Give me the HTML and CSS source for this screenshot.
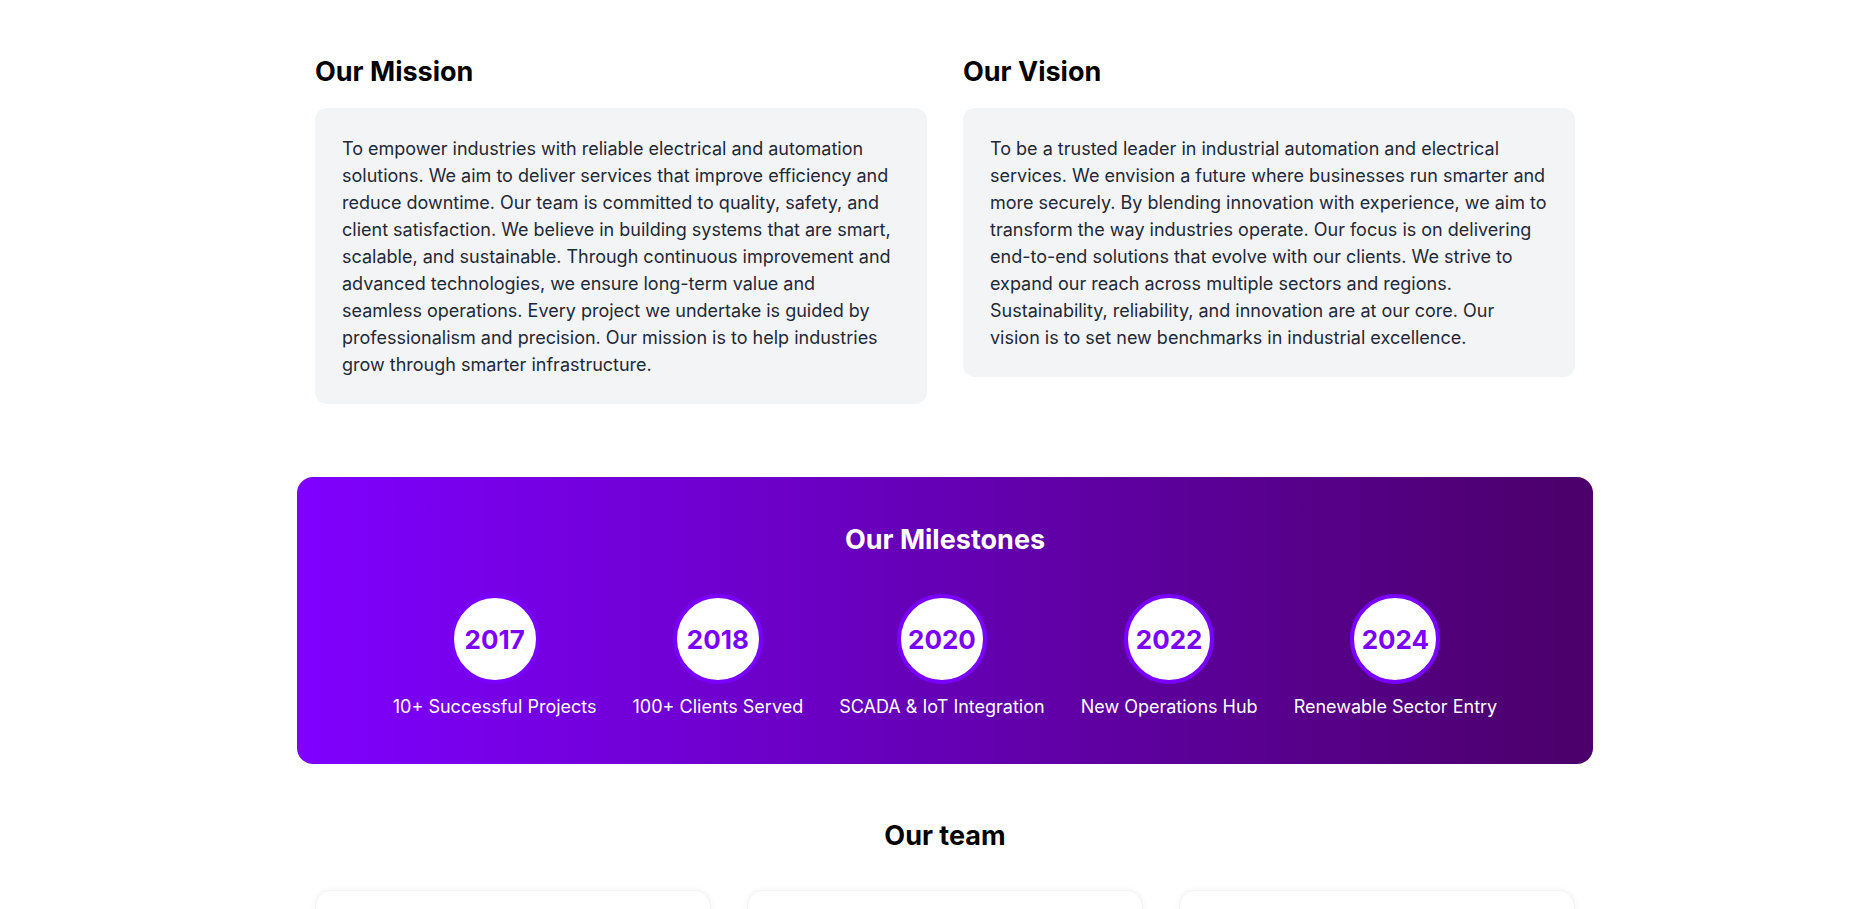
FILE: index.html
```html
<!DOCTYPE html>
<html lang="en">
<head>
<meta charset="utf-8">
<title>About</title>
<link rel="stylesheet" href="styles.css">
</head>
<body>
<main class="page">
  <section class="mv">
    <div class="mv-col">
      <h2 class="mv-title">Our Mission</h2>
      <div class="mv-card">
        <p>To empower industries with reliable electrical and automation solutions. We aim to deliver services that improve efficiency and reduce downtime. Our team is committed to quality, safety, and client satisfaction. We believe in building systems that are smart, scalable, and sustainable. Through continuous improvement and advanced technologies, we ensure long-term value and seamless operations. Every project we undertake is guided by professionalism and precision. Our mission is to help industries grow through smarter infrastructure.</p>
      </div>
    </div>
    <div class="mv-col">
      <h2 class="mv-title">Our Vision</h2>
      <div class="mv-card">
        <p>To be a trusted leader in industrial automation and electrical services. We envision a future where businesses run smarter and more securely. By blending innovation with experience, we aim to transform the way industries operate. Our focus is on delivering end-to-end solutions that evolve with our clients. We strive to expand our reach across multiple sectors and regions. Sustainability, reliability, and innovation are at our core. Our vision is to set new benchmarks in industrial excellence.</p>
      </div>
    </div>
  </section>

  <section class="milestones">
    <h2 class="ms-title">Our Milestones</h2>
    <div class="ms-row">
      <div class="ms-item"><div class="ms-circle">2017</div><div class="ms-label">10+ Successful Projects</div></div>
      <div class="ms-item"><div class="ms-circle">2018</div><div class="ms-label">100+ Clients Served</div></div>
      <div class="ms-item"><div class="ms-circle">2020</div><div class="ms-label">SCADA &amp; IoT Integration</div></div>
      <div class="ms-item"><div class="ms-circle">2022</div><div class="ms-label">New Operations Hub</div></div>
      <div class="ms-item"><div class="ms-circle">2024</div><div class="ms-label">Renewable Sector Entry</div></div>
    </div>
  </section>

  <section class="team">
    <h2 class="team-title">Our team</h2>
    <div class="team-grid">
      <div class="team-card"></div>
      <div class="team-card"></div>
      <div class="team-card"></div>
    </div>
  </section>
</main>
</body>
</html>
```
FILE: styles.css
```css
* { box-sizing: border-box; }

html, body {
  margin: 0;
  background: #ffffff;
  font-family: Inter, "Noto Sans", "Liberation Sans", sans-serif;
  color: #000;
}

body { overflow: hidden; }

.page {
  max-width: 1277px;
  margin: 0 auto;
  padding: 54px 0 0 17px;
}

.mv {
  display: grid;
  grid-template-columns: 1fr 1fr;
  column-gap: 36px;
  align-items: start;
}

.mv-title {
  margin: 0 0 18px;
  font-size: 27px;
  line-height: 36px;
  font-weight: 700;
  color: #000;
}

.mv-card {
  background: #f3f4f6;
  border-radius: 12px;
  padding: 27px 27px 26px;
}

.mv-card p {
  margin: 0;
  font-size: 18px;
  line-height: 27px;
  color: #1f2937;
}

.milestones {
  margin: 73px -18px 0;
  border-radius: 16px;
  background: linear-gradient(to right, #7f00ff 0%, #4b0069 100%);
  padding: 47px 20px 43px;
  color: #fff;
  text-align: center;
}

.ms-title {
  margin: 0 0 38px;
  font-size: 27px;
  line-height: 32px;
  font-weight: 700;
}

.ms-row {
  display: flex;
  justify-content: center;
  gap: 36px;
}

.ms-item {
  display: flex;
  flex-direction: column;
  align-items: center;
}

.ms-circle {
  width: 90px;
  height: 90px;
  border-radius: 50%;
  background: #fff;
  border: 4px solid #7a00ff;
  color: #7a00ff;
  font-size: 26px;
  font-weight: 700;
  display: flex;
  align-items: center;
  justify-content: center;
}

.ms-label {
  margin-top: 9px;
  font-size: 18px;
  line-height: 28px;
  color: #fff;
  white-space: nowrap;
}

.team-title {
  margin: 54px 0 36px;
  text-align: center;
  font-size: 27px;
  line-height: 36px;
  font-weight: 700;
  color: #000;
}

.team-grid {
  display: grid;
  grid-template-columns: repeat(3, 1fr);
  gap: 36px;
}

.team-card {
  height: 420px;
  background: #fff;
  border-radius: 16px;
  border: 1px solid #f4f4f5;
  box-shadow: 0 0 6px rgba(0, 0, 0, 0.05);
}
```
